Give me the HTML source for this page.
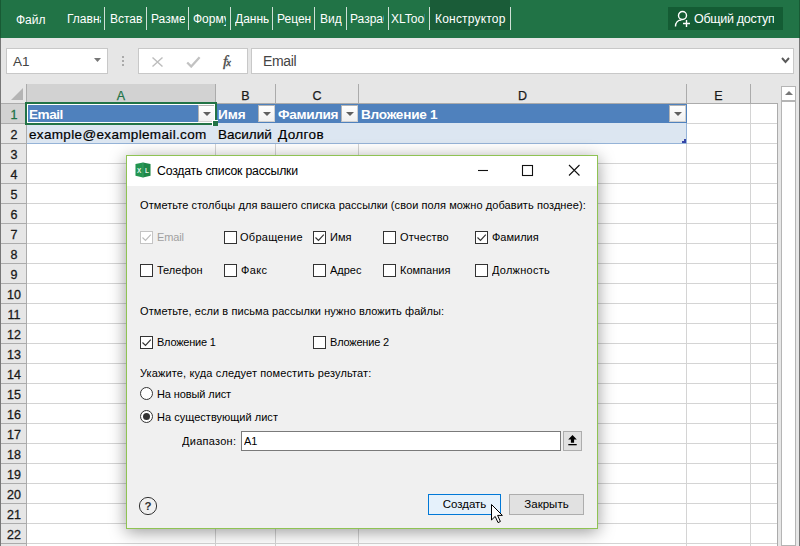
<!DOCTYPE html>
<html><head><meta charset="utf-8">
<style>
*{box-sizing:border-box;margin:0;padding:0}
html,body{width:800px;height:546px;overflow:hidden;background:#fff}
body{font-family:"Liberation Sans",sans-serif;position:relative;color:#000}
.abs{position:absolute}
#ribbon{left:0;top:0;width:800px;height:38px;background:#217346}
.tab{position:absolute;top:0px;height:38px;color:#fff;font-size:12px;line-height:38px;white-space:nowrap;overflow:hidden}
.sep{position:absolute;top:7px;width:1px;height:23px;background:#cfe0d6}
#fbar{left:0;top:38px;width:800px;height:46px;background:#e6e6e6}
.box{position:absolute;background:#fff;border:1px solid #c8c8c8}
#grid{left:0;top:85px;width:800px;height:461px;background:#fff}
.hl{position:absolute;left:27px;width:750px;height:1px;background:#d4d4d4}
.vl{position:absolute;top:104px;width:1px;height:442px;background:#d4d4d4}
.rh{position:absolute;left:1px;width:26px;height:20px;background:#e6e6e6;border-bottom:1px solid #ababab;border-right:1px solid #ababab;font-size:12.5px;line-height:23px;text-align:center;color:#1a1a1a;padding-left:1px;overflow:hidden;-webkit-text-stroke:0.3px}
.ch{position:absolute;top:84px;height:20px;background:#e6e6e6;border-right:1px solid #ababab;border-bottom:1px solid #ababab;font-size:12.5px;line-height:24px;text-align:center;color:#1a1a1a;overflow:hidden;-webkit-text-stroke:0.25px}
.cell{position:absolute;font-size:13.5px;line-height:22px;white-space:nowrap;-webkit-text-stroke:0.2px}
.th{position:absolute;top:104px;height:19px;background:#4f81bd;color:#fff;font-weight:bold;font-size:13.6px;line-height:22px;overflow:hidden;padding-left:2px;white-space:nowrap}
.dd{position:absolute;top:105px;width:17px;height:17px;background:linear-gradient(#fff,#f0f0f0);border:1px solid #b4b4b4;border-right-color:#d0d0d0;border-bottom-color:#d0d0d0}
.dd:after{content:"";position:absolute;left:4px;top:6px;border-left:4px solid transparent;border-right:4px solid transparent;border-top:4px solid #606060}
#dlg{left:126px;top:155px;width:472px;height:374px;background:#f0f0f0;border:1px solid #8fc353;box-shadow:0 3px 16px rgba(0,0,0,.40)}
#ttl{position:absolute;left:0;top:0;width:470px;height:30px;background:#fff}
.t11{position:absolute;font-size:11px;line-height:13px;white-space:nowrap;color:#000;transform:scaleY(1.07);transform-origin:0 10.1px}
.cb{position:absolute;width:13px;height:13px;background:#fff;border:1px solid #333}
.rb{position:absolute;width:13px;height:13px;background:#fff;border:1px solid #333;border-radius:50%}
.btn{position:absolute;height:21px;font-size:11.5px;line-height:19px;text-align:center;background:#e1e1e1;border:1px solid #adadad}
</style></head><body>
<div id="ribbon" class="abs">
 <div class="abs" style="left:0;top:0;width:1px;height:38px;background:#185a34"></div>
 <div class="tab" style="left:16px;top:1px">Файл</div>
 <div class="tab" style="left:67px;width:34px">Главная</div>
 <div class="sep" style="left:104px"></div>
 <div class="tab" style="left:110px;width:33px">Вставка</div>
 <div class="sep" style="left:146px"></div>
 <div class="tab" style="left:151px;width:34px">Разметка</div>
 <div class="sep" style="left:188px"></div>
 <div class="tab" style="left:193px;width:33px">Формулы</div>
 <div class="sep" style="left:230px"></div>
 <div class="tab" style="left:235px;width:34px">Данные</div>
 <div class="sep" style="left:272px"></div>
 <div class="tab" style="left:277px;width:34px">Рецензир</div>
 <div class="sep" style="left:314px"></div>
 <div class="tab" style="left:320px">Вид</div>
 <div class="sep" style="left:346px"></div>
 <div class="tab" style="left:350px;width:34px">Разработчик</div>
 <div class="sep" style="left:388px"></div>
 <div class="tab" style="left:391px;width:34px">XLTools</div>
 <div class="abs" style="left:430px;top:0;width:80px;height:30px;background:#1a5c38"></div>
 <div class="sep" style="left:429px"></div>
 <div class="tab" style="left:435px;letter-spacing:0.2px">Конструктор</div>
 <div class="sep" style="left:510px"></div>
 <div class="abs" style="left:668px;top:7px;width:115px;height:23px;background:#145c34"></div>
 <svg class="abs" style="left:674px;top:10px" width="18" height="18" viewBox="0 0 18 18" fill="none" stroke="#fff" stroke-width="1.4"><circle cx="8.5" cy="5.5" r="4"/><path d="M1.5 16.5c0-4 2.5-6.5 6-6.5"/><path d="M12.5 10v7M9 13.5h7"/></svg>
 <div class="tab" style="left:694px;font-size:12.5px;letter-spacing:-0.3px">Общий доступ</div>
</div>

<div id="fbar" class="abs">
 <div class="abs" style="left:0;top:0;width:1px;height:46px;background:#777"></div>
 <div class="box" style="left:6px;top:10px;width:102px;height:26px"></div>
 <div class="abs" style="left:13px;top:11px;font-size:13.5px;line-height:26px;color:#444">A1</div>
 <svg class="abs" style="left:94px;top:20px" width="7" height="4" viewBox="0 0 7 4"><path d="M0 0h7L3.5 4z" fill="#777"/></svg>
 <div class="abs" style="left:122px;top:18px;width:2px;height:2px;background:#aaa;box-shadow:0 4px 0 #aaa,0 8px 0 #aaa"></div>
 <div class="box" style="left:138px;top:10px;width:110px;height:26px"></div>
 <svg class="abs" style="left:152px;top:19px" width="11" height="10" viewBox="0 0 11 10" stroke="#bdbdbd" stroke-width="1.4" fill="none"><path d="M0.5 0.5l10 9M10.5 0.5l-10 9"/></svg>
 <svg class="abs" style="left:186px;top:18px" width="15" height="12" viewBox="0 0 15 12" stroke="#c2c2c2" stroke-width="2.3" fill="none"><path d="M1.2 6.5l4 4L13.6 1.2"/></svg>
 <div class="abs" style="left:223px;top:10px;font-family:'Liberation Serif',serif;font-style:italic;font-size:15.5px;line-height:26px;color:#4a4a4a;-webkit-text-stroke:0.35px #4a4a4a">f<span style="font-size:10.5px;margin-left:-1px">x</span></div>
 <div class="box" style="left:251px;top:10px;width:543px;height:26px"></div>
 <div class="abs" style="left:263px;top:10px;font-size:14px;line-height:26px;color:#444;letter-spacing:-0.35px">Email</div>
 <svg class="abs" style="left:781px;top:19px" width="9" height="7" viewBox="0 0 9 7" stroke="#5a5a5a" stroke-width="1.9" fill="none"><path d="M1 1l3.5 4L8 1"/></svg>
</div>

<div id="grid" class="abs"></div>
<!-- column headers -->
<div class="abs" style="left:0;top:84px;width:800px;height:20px;background:#e6e6e6"></div>
<div class="abs" style="left:0;top:84px;width:1px;height:462px;background:#777"></div>
<div class="ch" style="left:1px;width:26px"></div>
<div class="abs" style="left:11px;top:88px;border-left:12px solid transparent;border-bottom:12px solid #b4b4b4"></div>
<div class="ch" style="left:27px;width:189px;background:#d2d2d2;color:#217346">A</div>
<div class="ch" style="left:216px;width:60px">B</div>
<div class="ch" style="left:276px;width:83px">C</div>
<div class="ch" style="left:359px;width:328px">D</div>
<div class="ch" style="left:687px;width:64px">E</div>
<div class="ch" style="left:751px;width:27px;border-right:none"></div>
<div id="rows"><div class="rh" style="top:104px;background:#d2d2d2;color:#217346">1</div><div class="hl" style="top:123px"></div><div class="rh" style="top:124px">2</div><div class="hl" style="top:143px"></div><div class="rh" style="top:144px">3</div><div class="hl" style="top:163px"></div><div class="rh" style="top:164px">4</div><div class="hl" style="top:183px"></div><div class="rh" style="top:184px">5</div><div class="hl" style="top:203px"></div><div class="rh" style="top:204px">6</div><div class="hl" style="top:223px"></div><div class="rh" style="top:224px">7</div><div class="hl" style="top:243px"></div><div class="rh" style="top:244px">8</div><div class="hl" style="top:263px"></div><div class="rh" style="top:264px">9</div><div class="hl" style="top:283px"></div><div class="rh" style="top:284px">10</div><div class="hl" style="top:303px"></div><div class="rh" style="top:304px">11</div><div class="hl" style="top:323px"></div><div class="rh" style="top:324px">12</div><div class="hl" style="top:343px"></div><div class="rh" style="top:344px">13</div><div class="hl" style="top:363px"></div><div class="rh" style="top:364px">14</div><div class="hl" style="top:383px"></div><div class="rh" style="top:384px">15</div><div class="hl" style="top:403px"></div><div class="rh" style="top:404px">16</div><div class="hl" style="top:423px"></div><div class="rh" style="top:424px">17</div><div class="hl" style="top:443px"></div><div class="rh" style="top:444px">18</div><div class="hl" style="top:463px"></div><div class="rh" style="top:464px">19</div><div class="hl" style="top:483px"></div><div class="rh" style="top:484px">20</div><div class="hl" style="top:503px"></div><div class="rh" style="top:504px">21</div><div class="hl" style="top:523px"></div><div class="rh" style="top:524px">22</div><div class="hl" style="top:543px"></div><div class="rh" style="top:544px">23</div><div class="hl" style="top:563px"></div><div class="vl" style="left:215px"></div><div class="vl" style="left:275px"></div><div class="vl" style="left:358px"></div><div class="vl" style="left:686px"></div><div class="vl" style="left:750px"></div></div>
<!-- scrollbar -->
<div class="abs" style="left:778px;top:84px;width:22px;height:462px;background:#e6e6e6"></div>
<div class="abs" style="left:777px;top:103px;width:1px;height:443px;background:#ababab"></div>
<div class="abs" style="left:781px;top:101px;width:15px;height:445px;background:#fff;border:1px solid #b5b5b5"></div>
<div class="abs" style="left:781px;top:86px;width:15px;height:15px;background:#fff;border:1px solid #b5b5b5"></div>
<svg class="abs" style="left:785px;top:91px" width="8" height="4" viewBox="0 0 8 4"><path d="M0 4L4 0L8 4z" fill="#777"/></svg>
<div class="abs" style="left:799px;top:38px;width:1px;height:508px;background:#777"></div>
<div class="abs" style="left:799px;top:0;width:1px;height:38px;background:#185a34"></div>
<!-- table -->
<div class="th" style="left:27px;width:189px;letter-spacing:-0.5px">Email</div>
<div class="th" style="left:216px;width:60px">Имя</div>
<div class="th" style="left:276px;width:83px;letter-spacing:-0.35px">Фамилия</div>
<div class="th" style="left:359px;width:328px;letter-spacing:-0.25px">Вложение 1</div>
<div class="dd" style="left:198px"></div>
<div class="dd" style="left:258px"></div>
<div class="dd" style="left:341px"></div>
<div class="dd" style="left:669px"></div>
<div class="abs" style="left:27px;top:123px;width:660px;height:20px;background:#dce6f1"></div>
<div class="abs" style="left:27px;top:143px;width:660px;height:1px;background:#95b3d7"></div>
<div class="cell" style="left:29px;top:124px;letter-spacing:0.34px">example@examplemail.com</div>
<div class="cell" style="left:218px;top:124px">Василий</div>
<div class="cell" style="left:278px;top:124px;letter-spacing:0.4px">Долгов</div>
<div class="abs" style="left:25px;top:102px;width:192px;height:23px;border:2px solid #217346;box-shadow:inset 0 0 0 1px #fff"></div>
<div class="abs" style="left:212px;top:120px;width:6px;height:6px;background:#217346;border-left:1px solid #fff;border-top:1px solid #fff"></div>
<div class="abs" style="left:686px;top:123px;width:1px;height:21px;background:#95b3d7"></div><div class="abs" style="left:682px;top:141px;width:4px;height:2px;background:#3646a8"></div><div class="abs" style="left:684px;top:139px;width:2px;height:2px;background:#3646a8"></div>

<!-- dialog -->
<div id="dlg" class="abs">
 <div id="ttl"></div>
 <svg class="abs" style="left:8px;top:6px" width="16" height="16" viewBox="0 0 17 17"><path d="M0.5 2L8.5 0.6V16.4L0.5 14.6z" fill="#239550"/><path d="M8.5 0.6L16.5 2V14.6L8.5 16.4z" fill="#1f8748"/><path d="M8 0.7h1v15.6h-1z" fill="#3a9f66"/><text x="4.3" y="11.2" font-size="6.8" font-family="Liberation Sans" font-weight="bold" fill="#e4f3ea" text-anchor="middle">X</text><text x="12.6" y="11.2" font-size="6.8" font-family="Liberation Sans" font-weight="bold" fill="#e4f3ea" text-anchor="middle">L</text></svg>
 <div class="abs" style="left:30px;top:0;font-size:12.3px;line-height:30px;white-space:nowrap;letter-spacing:-0.22px">Создать список рассылки</div>
 <svg class="abs" style="left:351px;top:7px" width="104" height="14" viewBox="0 0 104 14" stroke="#111" stroke-width="1.1" fill="none"><path d="M0 7.5h10"/><rect x="44.5" y="2.5" width="10" height="10"/><path d="M91 2l10.5 10.5M101.5 2l-10.5 10.5"/></svg>

 <div class="t11" id="t1" style="letter-spacing:0.073px;left:13px;top:43px">Отметьте столбцы для вашего списка рассылки (свои поля можно добавить позднее):</div>

 <div class="cb" style="left:13px;top:75px;border-color:#c4c4c4;background:#fff"><svg width="11" height="11" viewBox="0 0 11 11" style="position:absolute;left:0;top:0"><path d="M1.5 5.5L4.5 8.5L9.8 2.6" fill="none" stroke="#bcbcbc" stroke-width="1.15"/></svg></div><div class="t11" id="t_email" style="letter-spacing:-0.15px;left:30px;top:75px;color:#a0a0a0">Email</div>
 <div class="cb" style="left:97px;top:75px"></div><div class="t11" id="t_obr" style="letter-spacing:0.262px;left:113px;top:75px">Обращение</div>
 <div class="cb" style="left:186px;top:75px"><svg width="11" height="11" viewBox="0 0 11 11" style="position:absolute;left:0;top:0"><path d="M1.5 5.5L4.5 8.5L9.8 2.6" fill="none" stroke="#333" stroke-width="1.15"/></svg></div><div class="t11" id="t_imya" style="left:203px;top:75px">Имя</div>
 <div class="cb" style="left:256px;top:75px"></div><div class="t11" id="t_otch" style="letter-spacing:0.129px;left:273px;top:75px">Отчество</div>
 <div class="cb" style="left:348px;top:75px"><svg width="11" height="11" viewBox="0 0 11 11" style="position:absolute;left:0;top:0"><path d="M1.5 5.5L4.5 8.5L9.8 2.6" fill="none" stroke="#333" stroke-width="1.15"/></svg></div><div class="t11" id="t_fam" style="left:365px;top:75px">Фамилия</div>

 <div class="cb" style="left:13px;top:108px"></div><div class="t11" id="t_tel" style="left:30px;top:108px">Телефон</div>
 <div class="cb" style="left:97px;top:108px"></div><div class="t11" id="t_fax" style="letter-spacing:0.393px;left:114px;top:108px">Факс</div>
 <div class="cb" style="left:186px;top:108px"></div><div class="t11" id="t_adr" style="left:203px;top:108px">Адрес</div>
 <div class="cb" style="left:256px;top:108px"></div><div class="t11" id="t_comp" style="left:273px;top:108px">Компания</div>
 <div class="cb" style="left:348px;top:108px"></div><div class="t11" id="t_dolzh" style="letter-spacing:0.25px;left:365px;top:108px">Должность</div>

 <div class="t11" id="t2" style="letter-spacing:0.075px;left:13px;top:149px">Отметьте, если в письма рассылки нужно вложить файлы:</div>
 <div class="cb" style="left:13px;top:180px"><svg width="11" height="11" viewBox="0 0 11 11" style="position:absolute;left:0;top:0"><path d="M1.5 5.5L4.5 8.5L9.8 2.6" fill="none" stroke="#333" stroke-width="1.15"/></svg></div><div class="t11" id="t_vl1" style="letter-spacing:-0.233px;left:30px;top:180px">Вложение 1</div>
 <div class="cb" style="left:186px;top:180px"></div><div class="t11" id="t_vl2" style="letter-spacing:-0.202px;left:203px;top:180px">Вложение 2</div>

 <div class="t11" id="t3" style="letter-spacing:0.128px;left:13px;top:211px">Укажите, куда следует поместить результат:</div>
 <div class="rb" style="left:13px;top:231px"></div><div class="t11" id="t_new" style="letter-spacing:-0.1px;left:30px;top:232px">На новый лист</div>
 <div class="rb" style="left:13px;top:254px"></div><div class="abs" style="left:16px;top:257px;width:7px;height:7px;border-radius:50%;background:#333"></div><div class="t11" id="t_exist" style="letter-spacing:0.02px;left:30px;top:255px">На существующий лист</div>
 <div class="t11" id="t_range" style="letter-spacing:0.272px;left:55px;top:279px">Диапазон:</div>
 <div class="abs" style="left:114px;top:275px;width:320px;height:20px;background:#fff;border:1px solid #7a7a7a"></div>
 <div class="t11" id="t_a1" style="left:117px;top:279px">A1</div>
 <div class="abs" style="left:436px;top:275px;width:19px;height:20px;background:#e1e1e1;border:1px solid #adadad"></div>
 <svg class="abs" style="left:441px;top:279px" width="9" height="11" viewBox="0 0 9 11" fill="#000"><path d="M4.5 0L8.8 4.6H6.1V7.8H2.9V4.6H0.2z"/><rect x="0.3" y="9" width="8.4" height="1.3"/></svg>

 <svg class="abs" style="left:11px;top:340px" width="20" height="20" viewBox="0 0 20 20"><circle cx="10" cy="10" r="8.6" fill="none" stroke="#333" stroke-width="1"/><text x="10" y="14" text-anchor="middle" font-size="11.5" font-family="Liberation Sans" font-weight="bold" fill="#333">?</text></svg>
 <div class="btn" style="left:301px;top:338px;width:73px;background:#e5f1fb;border-color:#0078d7">Создать</div>
 <div class="btn" style="left:382px;top:338px;width:75px">Закрыть</div>
</div>
<!-- cursor -->
<svg class="abs" style="left:490px;top:503px" width="14" height="21" viewBox="0 0 14 21"><path d="M1.5 1.5V17L5.2 13.4L8 19.6L10.4 18.5L7.6 12.4H12.4z" fill="#fff" stroke="#000" stroke-width="1" stroke-linejoin="miter"/></svg>
</body></html>
